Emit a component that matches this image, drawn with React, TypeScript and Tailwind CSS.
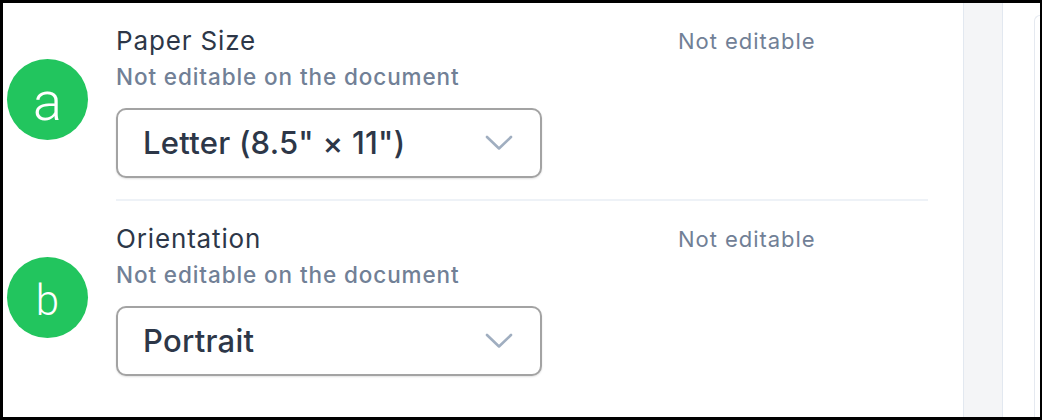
const sans = 'font-["Inter","Noto_Sans",sans-serif]';

interface SettingProps {
  badge: string;
  badgeClass: string;
  title: string;
  value: string;
}

function Chevron() {
  return (
    <svg width="28" height="16" viewBox="0 0 28 16" fill="none" className="shrink-0">
      <polyline
        points="2,2 14,13.5 26,2"
        stroke="#a0aec0"
        strokeWidth="2.6"
        strokeLinecap="round"
        strokeLinejoin="round"
      />
    </svg>
  );
}

function Setting({ badge, badgeClass, title, value }: SettingProps) {
  return (
    <div className="flex">
      {/* annotation badge */}
      <div className="w-[113px] shrink-0 pl-[4px] pt-[56px]">
        <div className="flex h-[81px] w-[81px] items-center justify-center rounded-full bg-[#22c55e]">
          <span className={`font-["Roboto",sans-serif] font-light leading-none text-white ${badgeClass}`}>
            {badge}
          </span>
        </div>
      </div>

      <div className={`grid w-[812px] grid-cols-[562px_1fr] pt-[22px] ${sans}`}>
        <div>
          <div className="text-[26px] leading-[32px] tracking-[0.85px] text-[#2d3748]">{title}</div>
          <div className="mt-[6px] text-[22.5px] leading-[28px] font-medium tracking-[0.9px] text-[#718096]">
            Not editable on the document
          </div>
          <div className="mt-[17px] flex h-[70px] w-[426px] items-center justify-between rounded-[10px] border-2 border-[#a3a3a3] bg-white pl-[25px] pr-[27px] shadow-[0_1px_2px_rgba(0,0,0,0.12)]">
            <span className="text-[31px] font-medium tracking-[0.25px] text-[#2d3748]">{value}</span>
            <Chevron />
          </div>
        </div>
        <div className="pt-[2px] text-[22px] leading-[28px] tracking-[0.95px] text-[#718096]">Not editable</div>
      </div>
    </div>
  );
}

export default function App() {
  return (
    <div className="flex h-[420px] w-[1042px] border-t-[3px] border-r-2 border-b-[3px] border-l-[3px] border-black bg-white">
      <div className="w-[960px] shrink-0">
        <div className="h-[196px]">
          <Setting badge="a" badgeClass="text-[54px] mt-[4px]" title="Paper Size" value={'Letter (8.5" × 11")'} />
        </div>
        <div className="ml-[113px] h-[2px] w-[812px] bg-[#eef2f7]" />
        <Setting badge="b" badgeClass="text-[42px] mt-[6px]" title="Orientation" value="Portrait" />
      </div>

      {/* side rail */}
      <div className="w-[40px] shrink-0 border-x border-[#e2e8f0] bg-[#f4f5f7]" />
      <div className="flex flex-1 pl-[31px] pt-[12px]">
        <div className="w-[6px] rounded-tl-[6px] border-t border-l border-[#e5e9f0]" />
      </div>
    </div>
  );
}
